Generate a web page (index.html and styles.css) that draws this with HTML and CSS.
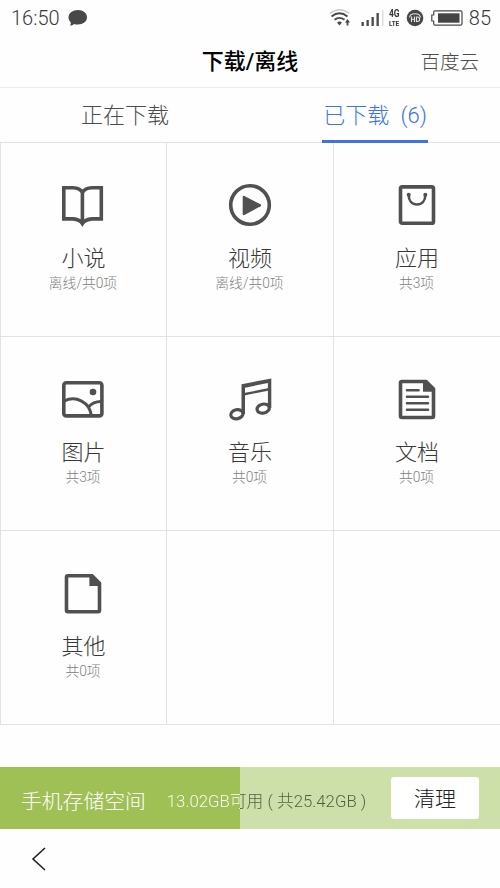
FILE: index.html
```html
<!DOCTYPE html>
<html lang="zh-CN">
<head>
<meta charset="utf-8">
<title>下载/离线</title>
<link rel="stylesheet" href="styles.css">
</head>
<body>
<div class="status">
  <span class="time">16:50</span>
  <svg class="bubble" width="20" height="18" viewBox="0 0 20 18"><path d="M10 1C15 1 19 4 19 8.300C19 12.500 15 15.500 10 15.500C8.500 15.500 7 15.300 6 14.900C5 15.900 3.500 16.500 2 16.500C2.800 15.600 3 14.500 2.700 13.200C1.300 12 .5 10.200 .5 8.300C.5 4 5 1 10 1Z" fill="#484848"/></svg>
  <div class="indicators">
    <svg width="22" height="20" viewBox="0 0 22 20" fill="none"><path d="M.8 5.500Q10.500-2 20.500 5.500" stroke="#ccc" stroke-width="1.500"/><path d="M2.500 8.500Q10.500 2 18.500 8.500M5.500 11.800Q10.500 8 15.500 11.800" stroke="#484848" stroke-width="1.800"/><path d="M8 14.500Q10.500 12.700 13 14.500L10.500 17.500ZM16 14.500L18.500 11L21 14.500H19.400V17.500H17.600V14.500Z" fill="#484848"/></svg>
    <svg class="signal" width="24" height="18" viewBox="0 0 24 18"><path d="M.5 13h2.300v4H.5zM5.500 11h2.300v6H5.500zM10.500 8h2.300v9h-2.300zM15.500 4h2.300v13h-2.300z" fill="#484848"/><path d="M21.300 1h1v16h-1z" fill="#ccc"/></svg>
    <span class="net"><b>4G</b><b class="lte">LTE</b></span>
    <svg class="hd" width="18" height="18" viewBox="0 0 18 18"><circle cx="9" cy="9" r="8.300" fill="#484848"/><path d="M3.500 8.500C4 3.500 14 3.500 14.500 8.500M5.500 7.500v5.500M8.500 7.500v5.500M5.500 10.200h3M10.500 8v4.500h1.200c2.500 0 2.500-4.500 0-4.500z" fill="none" stroke="#e4e4e4" stroke-width="1.100"/></svg>
    <svg class="battery" width="32" height="16" viewBox="0 0 32 16"><path d="M4 .8H29.500Q31 .8 31 2.300V13.700Q31 15.200 29.500 15.200H4Q2.700 15.200 2.700 13.700V11H.8V5H2.700V2.300Q2.700 .8 4 .8Z" fill="none" stroke="#484848" stroke-width="1.200"/><path d="M7 3.300H28.500V12.700H7z" fill="#444"/></svg>
    <span class="percent">85</span>
  </div>
</div>
<header class="header">
  <span></span>
  <h1>下载/离线</h1>
  <a class="cloud">百度云</a>
</header>
<nav class="tabs">
  <div class="tab"><span>正在下载</span></div>
  <div class="tab active"><span>已下载&ensp;(6)</span></div>
</nav>
<main class="grid">
  <div class="cell">
    <svg class="icon" viewBox="0 0 44 44"><path d="M2.800 4.700H12Q19 5 21.400 9.500Q24 5 31 4.700H40.300V35.900H31Q24 36.500 21.400 40.500Q19 36.500 12 35.900H2.800ZM21.400 9V40"/></svg>
    <div class="name">小说</div><div class="count">离线/共0项</div>
  </div>
  <div class="cell">
    <svg class="icon" viewBox="0 0 44 44"><circle cx="22" cy="22" r="19.300"/><path class="solid" d="M14.700 14Q14.700 12.300 16.400 13L32.500 21.300Q34 22.300 32.500 23.200L16.400 32Q14.700 32.600 14.700 31Z"/></svg>
    <div class="name">视频</div><div class="count">离线/共0项</div>
  </div>
  <div class="cell">
    <svg class="icon" viewBox="0 0 44 44"><rect x="5.500" y="3.900" width="33" height="36.300" rx="1.800"/><path class="handle" d="M13.700 12C13.700 18 17 21.500 22 21.500S30.300 18 30.300 12"/><circle class="solid" cx="13.700" cy="11.800" r="2"/><circle class="solid" cx="30.300" cy="11.800" r="2"/></svg>
    <div class="name">应用</div><div class="count">共3项</div>
  </div>
  <div class="cell">
    <svg class="icon" viewBox="0 0 44 44"><rect x="2.800" y="5.800" width="38.100" height="33.100" rx="2.500"/><path class="hill" d="M3.500 23.800C15 18.500 28.500 25 30.400 38.500M27.500 30Q32 24.500 40 24.500"/><circle class="solid" cx="32" cy="15" r="3.300"/></svg>
    <div class="name">图片</div><div class="count">共3项</div>
  </div>
  <div class="cell">
    <svg class="icon" viewBox="0 0 44 44"><path class="solid" d="M13.500 7.300L43.300 1.500V31H39.900V6L17 10.700V37H13.500Z"/><path class="beam" d="M16 17.200L41 12.300"/><ellipse class="note" cx="8.900" cy="37.200" rx="6.200" ry="4.500" transform="rotate(-12 8.900 37.200)"/><ellipse class="note" cx="35.200" cy="31.600" rx="6.200" ry="4.500" transform="rotate(-12 35.200 31.600)"/></svg>
    <div class="name">音乐</div><div class="count">共0项</div>
  </div>
  <div class="cell">
    <svg class="icon" viewBox="0 0 44 44"><path d="M7 4.500H31L38.500 12V39Q38.500 40.500 37 40.500H7Q5.500 40.500 5.500 39V6Q5.500 4.500 7 4.500Z"/><path class="solid" d="M28 3.500H32L40 12V14.700H28Z"/><path class="lines" d="M12 13.300H23.600M12 19.700H33M12 26.300H33M12 32.700H33"/></svg>
    <div class="name">文档</div><div class="count">共0项</div>
  </div>
  <div class="cell">
    <svg class="icon" viewBox="0 0 44 44"><path d="M7 4.800H31L38.500 12.300V39.300Q38.500 40.800 37 40.800H7Q5.500 40.800 5.500 39.300V6.300Q5.500 4.800 7 4.800Z"/><path class="solid" d="M28.400 4H32L40 12V15H28.400Z"/></svg>
    <div class="name">其他</div><div class="count">共0项</div>
  </div>
  <div class="cell"></div>
  <div class="cell"></div>
</main>
<section class="storage">
  <span class="label">手机存储空间</span>
  <span class="usage">13.02GB可用 ( 共25.42GB )</span>
  <button class="clean">清理</button>
</section>
<footer class="navbar">
  <svg width="16" height="26" viewBox="0 0 16 26"><path d="M14 2L2 13L14 24" fill="none" stroke="#222" stroke-width="1.600"/></svg>
</footer>
</body>
</html>
```
FILE: styles.css
```css
* { box-sizing: border-box; }
body {
  margin: 0;
  width: 500px;
  height: 888px;
  overflow: hidden;
  background: #fefefe;
  color: #383838;
  font-family: Roboto, "Noto Sans CJK SC", sans-serif;
  font-weight: 300;
}
.status {
  display: flex;
  align-items: center;
  height: 35px;
  padding: 0 9px 0 11px;
}
.time { font-size: 20px; }
.bubble { margin-left: 8px; }
.indicators { display: flex; align-items: center; margin-left: auto; }
.signal { margin-left: 10px; }
.net {
  display: flex;
  flex-direction: column;
  align-items: center;
  width: 12px;
  margin-left: 3px;
  font-size: 10px;
  line-height: 11px;
}
.net b { font-weight: 700; transform: scaleX(.85); }
.net .lte { font-size: 7.500px; line-height: 9px; transform: scaleX(.85); }
.hd { margin-left: 6px; }
.battery { margin-left: 7px; }
.percent { margin-left: 6px; font-size: 20px; }
.header {
  display: grid;
  grid-template-columns: 1fr auto 1fr;
  align-items: center;
  height: 53px;
  padding: 0 21px;
  border-bottom: 1px solid #ebebeb;
}
h1 { margin: 0; padding-top: 2px; font-size: 22px; font-weight: 500; line-height: 30px; color: #000; }
.cloud { justify-self: end; padding-bottom: 1px; font-size: 19.5px; color: #4c4c4c; }
.tabs { display: flex; height: 54px; }
.tab {
  flex: 1;
  display: flex;
  justify-content: center;
  font-size: 22px;
  line-height: 55px;
  color: #4c4c4c;
}
.tab span { height: 55px; white-space: nowrap; }
.active { color: #3c74e6; }
.active span { border-bottom: 3px solid #3c74e6; padding: 0 1px; position: relative; }
.grid {
  display: grid;
  grid-template-columns: 166px 167px 167px;
  grid-auto-rows: 194px;
  height: 583px;
  border-top: 1px solid #e2e2e2;
}
.cell {
  display: flex;
  flex-direction: column;
  align-items: center;
  padding: 40px 1px 0 0;
  border-left: 1px solid #e2e2e2;
  border-bottom: 1px solid #e2e2e2;
}
.icon {
  width: 44px;
  height: 44px;
  fill: none;
  stroke: #505050;
  stroke-width: 3.600;
}
.icon .solid { fill: #505050; stroke: none; }
.icon .handle, .icon .lines { stroke-width: 2.600; stroke-linecap: round; }
.icon .hill { stroke-width: 3; }
.icon .beam { stroke-width: 2.400; }
.icon .note { stroke-width: 3.200; }
.name { margin-top: 17px; padding-left: 1px; font-size: 22px; line-height: 30px; }
.count { margin-top: -1px; font-size: 13.800px; line-height: 20px; color: #808080; }
.storage {
  display: flex;
  align-items: center;
  height: 62px;
  margin-top: 42px;
  padding: 0 21px 0 21px;
  background: linear-gradient(90deg, #9fc054 240px, #cee0a9 240px);
}
.label { padding-top: 4px; font-size: 20.800px; color: #fff; }
.usage {
  margin-left: 21px;
  padding-top: 5px;
  font-size: 16.800px;
  line-height: 24px;
  white-space: nowrap;
  color: transparent;
  background: linear-gradient(90deg, #fff 73px, #4f5c42 73px);
  -webkit-background-clip: text;
  background-clip: text;
}
.clean {
  width: 88px;
  height: 42px;
  margin-left: auto;
  padding: 0 0 2px;
  border: 0;
  border-radius: 3px;
  background: #fff;
  color: #222;
  font: inherit;
  font-size: 21px;
}
.navbar { display: flex; align-items: center; height: 59px; padding-left: 31px; }
```
